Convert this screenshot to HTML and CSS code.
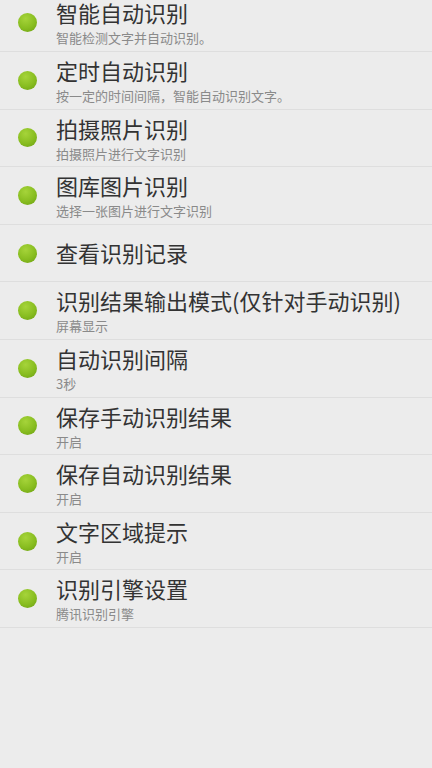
FILE: index.html
```html
<!DOCTYPE html>
<html lang="zh-CN">
<head>
  <meta charset="UTF-8">
  <title>设置</title>
  <link rel="stylesheet" href="styles.css">
</head>
<body>

  <ul class="pref-list">
    <li class="pref-item">
      <span class="dot"></span>
      <div class="pref-text">
        <div class="pref-title">智能自动识别</div>
        <div class="pref-summary">智能检测文字并自动识别。</div>
      </div>
    </li>
    <li class="pref-item">
      <span class="dot"></span>
      <div class="pref-text">
        <div class="pref-title">定时自动识别</div>
        <div class="pref-summary">按一定的时间间隔，智能自动识别文字。</div>
      </div>
    </li>
    <li class="pref-item">
      <span class="dot"></span>
      <div class="pref-text">
        <div class="pref-title">拍摄照片识别</div>
        <div class="pref-summary">拍摄照片进行文字识别</div>
      </div>
    </li>
    <li class="pref-item">
      <span class="dot"></span>
      <div class="pref-text">
        <div class="pref-title">图库图片识别</div>
        <div class="pref-summary">选择一张图片进行文字识别</div>
      </div>
    </li>
    <li class="pref-item">
      <span class="dot"></span>
      <div class="pref-text">
        <div class="pref-title">查看识别记录</div>
      </div>
    </li>
    <li class="pref-item">
      <span class="dot"></span>
      <div class="pref-text">
        <div class="pref-title">识别结果输出模式(仅针对手动识别)</div>
        <div class="pref-summary">屏幕显示</div>
      </div>
    </li>
    <li class="pref-item">
      <span class="dot"></span>
      <div class="pref-text">
        <div class="pref-title">自动识别间隔</div>
        <div class="pref-summary">3秒</div>
      </div>
    </li>
    <li class="pref-item">
      <span class="dot"></span>
      <div class="pref-text">
        <div class="pref-title">保存手动识别结果</div>
        <div class="pref-summary">开启</div>
      </div>
    </li>
    <li class="pref-item">
      <span class="dot"></span>
      <div class="pref-text">
        <div class="pref-title">保存自动识别结果</div>
        <div class="pref-summary">开启</div>
      </div>
    </li>
    <li class="pref-item">
      <span class="dot"></span>
      <div class="pref-text">
        <div class="pref-title">文字区域提示</div>
        <div class="pref-summary">开启</div>
      </div>
    </li>
    <li class="pref-item">
      <span class="dot"></span>
      <div class="pref-text">
        <div class="pref-title">识别引擎设置</div>
        <div class="pref-summary">腾讯识别引擎</div>
      </div>
    </li>
  </ul>

</body>
</html>
```

FILE: styles.css
```css
* {
  box-sizing: border-box;
}

html, body {
  height: 100%;
}

body {
  margin: 0;
  background: #ececec;
  font-family: 'Noto Sans CJK SC', 'Noto Sans', sans-serif;
  overflow: hidden;
}

.pref-list {
  list-style: none;
  margin: -5.6px 0 0;
  padding: 0;
}

.pref-item {
  display: flex;
  align-items: center;
  height: 57.6px;
  padding-left: 18px;
  border-bottom: 1px solid #dedede;
}

.dot {
  flex: none;
  width: 19px;
  height: 19px;
  border-radius: 50%;
  margin-right: 19px;
  background: radial-gradient(circle at 40% 30%, #a6d43a 0%, #88bd20 55%, #6a9e12 100%);
}

.pref-text {
  display: flex;
  flex-direction: column;
  margin-bottom: 1.6px;
}

.pref-title {
  font-size: 22px;
  line-height: 32px;
  color: #333;
  white-space: nowrap;
}

.pref-summary {
  font-size: 13px;
  line-height: 19px;
  color: #8a8a8a;
  white-space: nowrap;
}
```
